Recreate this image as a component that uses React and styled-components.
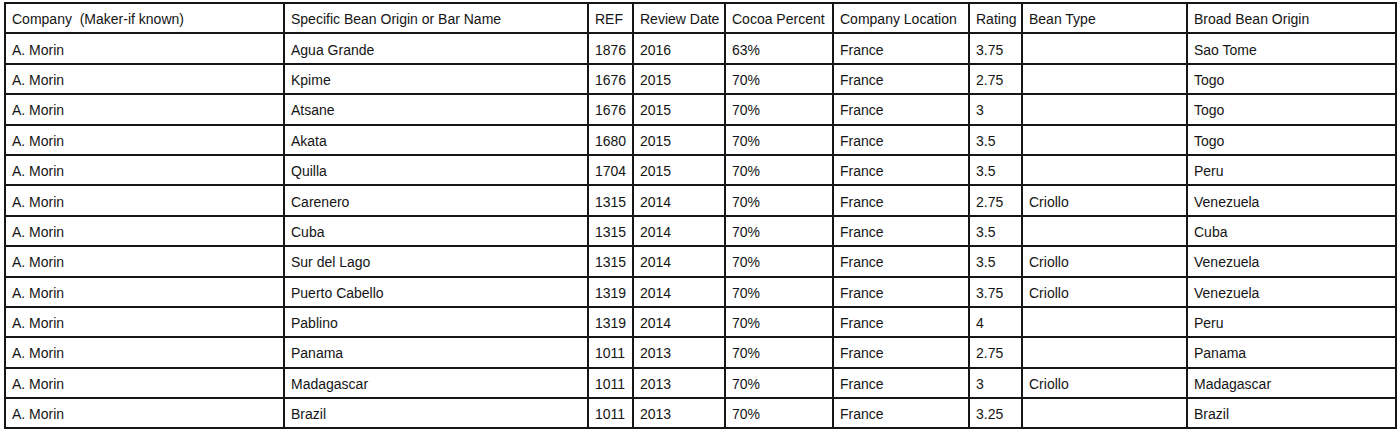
import React from 'react';
import styled, { createGlobalStyle } from 'styled-components';

const GlobalStyle = createGlobalStyle`
  body {
    margin: 0;
    background: #fff;
    font-family: "Liberation Sans", Arial, sans-serif;
  }
`;

const Page = styled.div`
  padding: 2px 0 0 4px;
`;

const Table = styled.table`
  border-collapse: collapse;
  table-layout: fixed;
  width: 1391px;
  border: 2px solid #161616;
  font-size: 14px;
  color: #141414;
`;

const Cell = styled.td`
  border: 2px solid #161616;
  height: 30.4px;
  padding: 2px 0 0 6px;
  box-sizing: border-box;
  white-space: nowrap;
  overflow: hidden;
  vertical-align: middle;
  font-weight: normal;
  text-align: left;
  line-height: 16px;
`;

const columns = [
  { label: 'Company\u00a0 (Maker-if known)', width: 279 },
  { label: 'Specific Bean Origin or Bar Name', width: 304 },
  { label: 'REF', width: 45 },
  { label: 'Review Date', width: 92 },
  { label: 'Cocoa Percent', width: 108 },
  { label: 'Company Location', width: 136 },
  { label: 'Rating', width: 53 },
  { label: 'Bean Type', width: 165 },
  { label: 'Broad Bean Origin', width: 209 },
];

const rows = [
  ['A. Morin', 'Agua Grande', '1876', '2016', '63%', 'France', '3.75', '', 'Sao Tome'],
  ['A. Morin', 'Kpime', '1676', '2015', '70%', 'France', '2.75', '', 'Togo'],
  ['A. Morin', 'Atsane', '1676', '2015', '70%', 'France', '3', '', 'Togo'],
  ['A. Morin', 'Akata', '1680', '2015', '70%', 'France', '3.5', '', 'Togo'],
  ['A. Morin', 'Quilla', '1704', '2015', '70%', 'France', '3.5', '', 'Peru'],
  ['A. Morin', 'Carenero', '1315', '2014', '70%', 'France', '2.75', 'Criollo', 'Venezuela'],
  ['A. Morin', 'Cuba', '1315', '2014', '70%', 'France', '3.5', '', 'Cuba'],
  ['A. Morin', 'Sur del Lago', '1315', '2014', '70%', 'France', '3.5', 'Criollo', 'Venezuela'],
  ['A. Morin', 'Puerto Cabello', '1319', '2014', '70%', 'France', '3.75', 'Criollo', 'Venezuela'],
  ['A. Morin', 'Pablino', '1319', '2014', '70%', 'France', '4', '', 'Peru'],
  ['A. Morin', 'Panama', '1011', '2013', '70%', 'France', '2.75', '', 'Panama'],
  ['A. Morin', 'Madagascar', '1011', '2013', '70%', 'France', '3', 'Criollo', 'Madagascar'],
  ['A. Morin', 'Brazil', '1011', '2013', '70%', 'France', '3.25', '', 'Brazil'],
];

const App = () => {
  return (
    <Page>
      <GlobalStyle />
      <Table>
        <colgroup>
          {columns.map((c) => (
            <col key={c.label} style={{ width: c.width }} />
          ))}
        </colgroup>
        <thead>
          <tr>
            {columns.map((c) => (
              <Cell as="th" key={c.label}>{c.label}</Cell>
            ))}
          </tr>
        </thead>
        <tbody>
          {rows.map((r, i) => (
            <tr key={i}>
              {r.map((v, j) => (
                <Cell key={j}>{v}</Cell>
              ))}
            </tr>
          ))}
        </tbody>
      </Table>
    </Page>
  );
};

export default App;
